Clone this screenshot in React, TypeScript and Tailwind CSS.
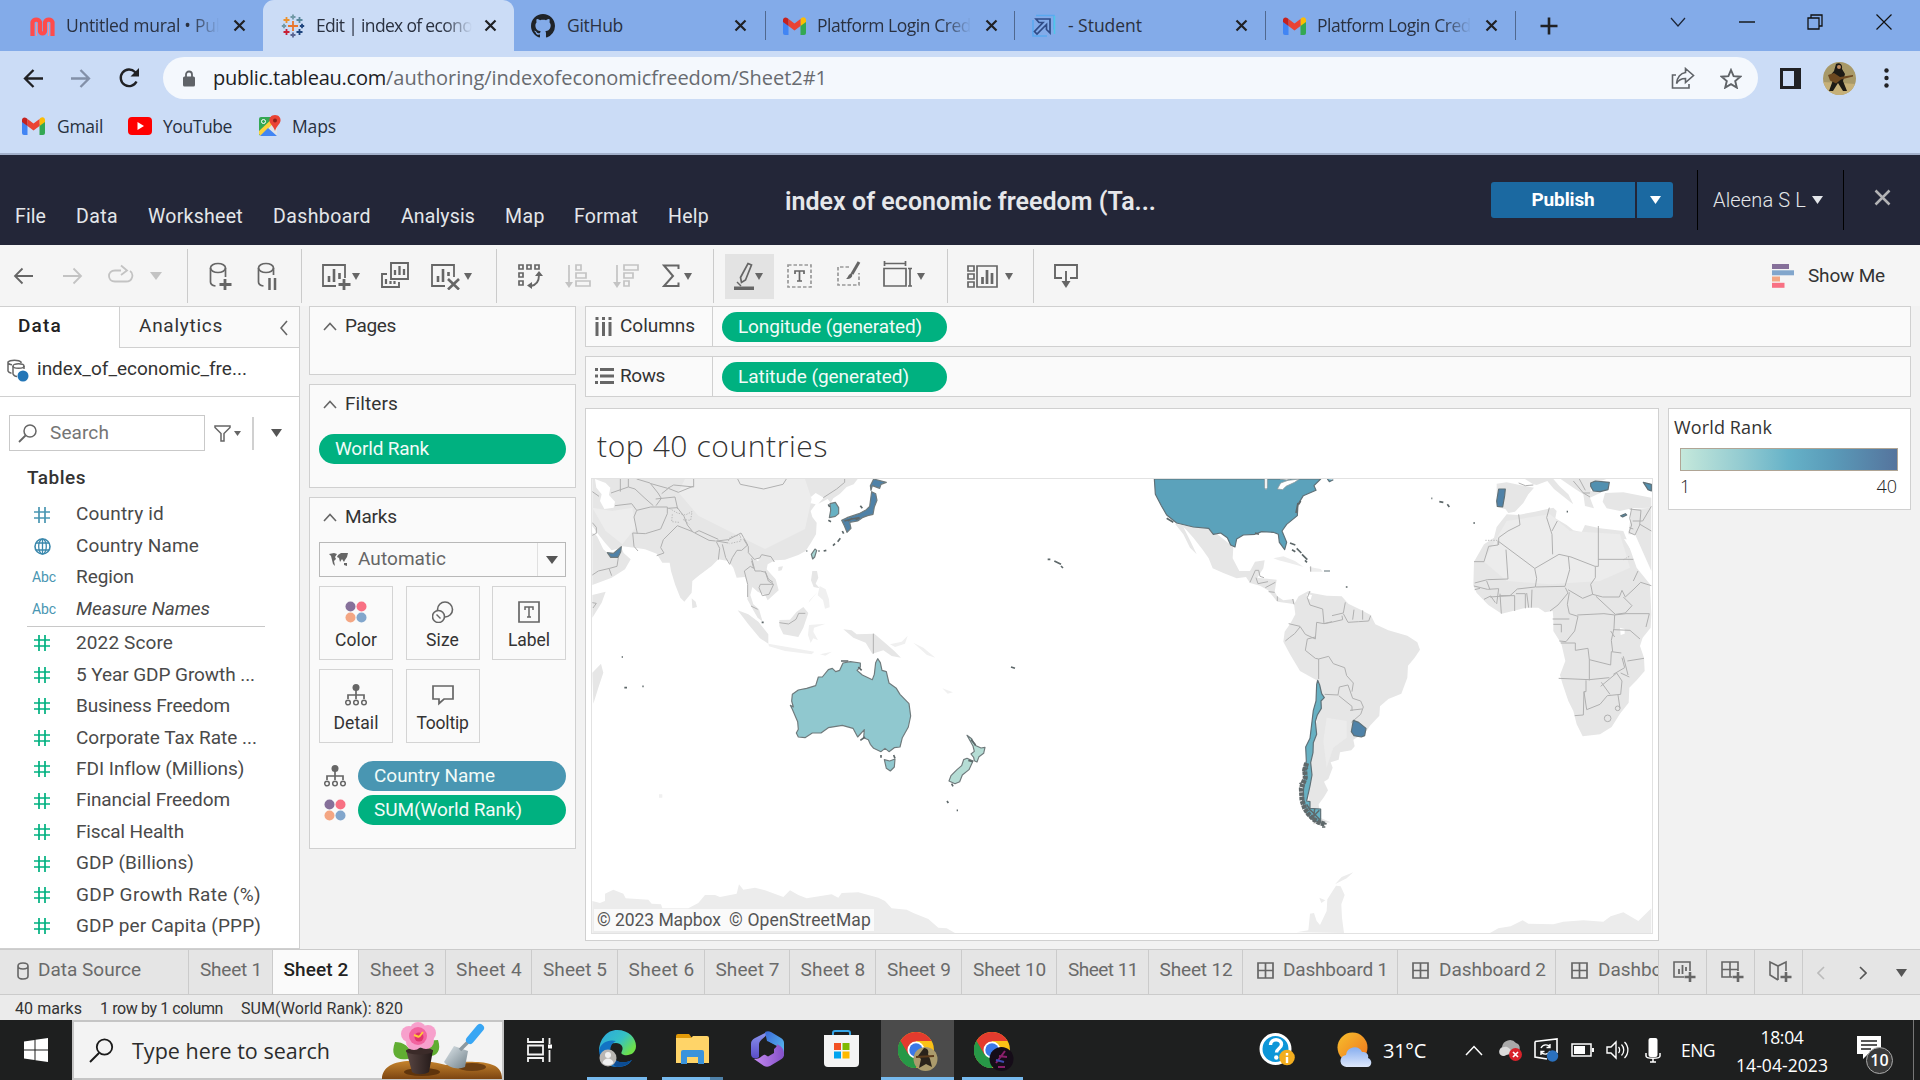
import React, { useLayoutEffect, useRef } from "react";
import type { ReactNode } from "react";

/* One line of text spaced out to an exact measure. */
function Fit({ w, className = "", children }: { w: number; className?: string; children: string }) {
  const ref = useRef<HTMLSpanElement>(null);
  useLayoutEffect(() => {
    const el = ref.current;
    if (!el) return;
    el.style.letterSpacing = "0px";
    const natural = el.getBoundingClientRect().width;
    el.style.letterSpacing = `${(w - natural) / children.length}px`;
  }, [w, children]);
  return (
    <span ref={ref} className={`inline-block shrink-0 whitespace-pre ${className}`}>
      {children}
    </span>
  );
}

function Svg({ w, h, className = "", children }: { w: number; h: number; className?: string; children: ReactNode }) {
  return (
    <svg width={w} height={h} viewBox={`0 0 ${w} ${h}`} fill="none" className={`block shrink-0 ${className}`}>
      {children}
    </svg>
  );
}

const Tri = ({ w = 8, h = 7, className = "" }: { w?: number; h?: number; className?: string }) => (
  <Svg w={w} h={h} className={className}>
    <path d={`M0 0H${w}L${w / 2} ${h}Z`} fill="currentColor" />
  </Svg>
);

const Gmail = ({ className = "" }: { className?: string }) => (
  <Svg w={23} h={18} className={className}>
    <path d="M0 3v13a2 2 0 0 0 2 2h3.5V7z" fill="#4285f4" />
    <path d="M23 3v13a2 2 0 0 1-2 2h-3.5V7z" fill="#34a853" />
    <path d="M17.5 2v7L23 5V3c0-2.600-2.600-3.800-4.600-2z" fill="#fbbc04" />
    <path d="M5.500 9V2l6 4.500 6-4.500v7l-6 4.600z" fill="#ea4335" />
    <path d="M0 3v2l5.500 4V2L4.600 1.200C2.600-.5 0 .6 0 3z" fill="#c5221f" />
  </Svg>
);

const Close = ({ className = "" }: { className?: string }) => (
  <Svg w={13} h={13} className={className}>
    <path d="M1.500 1.500l10 10M11.500 1.500l-10 10" stroke="#202124" strokeWidth="2.200" />
  </Svg>
);

const Mural = () => (
  <Svg w={25} h={20}>
    <path d="M2.500 20V6.300a4 4 0 0 1 7.500 0V15a2.500 2.500 0 0 0 5 0V6.300a4 4 0 0 1 7.500 0V20" stroke="#ff4b4b" strokeWidth="4.200" />
    <path d="M6.500 7v13M18.500 7v13" stroke="#ff8f8f" strokeWidth="1" />
  </Svg>
);

const Plus = ({ x, y, r, c }: { x: number; y: number; r: number; c: string }) => (
  <path d={`M${x - r} ${y}h${2 * r}M${x} ${y - r}v${2 * r}`} stroke={c} strokeWidth="1.800" />
);

const TableauLogo = () => (
  <Svg w={24} h={24}>
    <Plus x={12} y={12} r={5} c="#e8762d" />
    <Plus x={12} y={3} r={2.5} c="#7199a6" />
    <Plus x={12} y={21} r={2.5} c="#5b6591" />
    <Plus x={3} y={12} r={2.2} c="#7199a6" />
    <Plus x={21} y={12} r={2.2} c="#1f457e" />
    <Plus x={5.500} y={6} r={3} c="#eb912c" />
    <Plus x={18.500} y={6} r={3} c="#59879b" />
    <Plus x={5.500} y={18} r={3} c="#c72035" />
    <Plus x={18.500} y={18} r={3} c="#1f457e" />
  </Svg>
);

const GitHub = () => (
  <svg width="24" height="24" viewBox="0 0 16 16" fill="#1f2328" className="block shrink-0">
    <path d="M8 0C3.580 0 0 3.580 0 8c0 3.540 2.290 6.530 5.470 7.590.4.070.55-.17.55-.38 0-.19-.01-.82-.01-1.490-2.010.37-2.530-.49-2.690-.94-.09-.23-.48-.94-.82-1.130-.28-.15-.68-.52-.01-.53.63-.01 1.080.58 1.230.82.72 1.210 1.870.87 2.330.66.07-.52.28-.87.51-1.070-1.780-.2-3.640-.89-3.640-3.950 0-.87.31-1.590.82-2.150-.08-.2-.36-1.020.08-2.120 0 0 .67-.21 2.200.82.64-.18 1.320-.27 2-.27s1.360.09 2 .27c1.530-1.040 2.200-.82 2.200-.82.44 1.100.16 1.920.08 2.120.51.56.82 1.270.82 2.150 0 3.070-1.870 3.750-3.650 3.950.29.25.54.73.54 1.480 0 1.070-.01 1.930-.01 2.200 0 .21.15.46.55.38A8.010 8.010 0 0 0 16 8c0-4.420-3.580-8-8-8z" />
  </svg>
);

const ArrowSquare = () => (
  <Svg w={25} h={24}>
    <path d="M5 1.500h18v14M2 6v16h14" stroke="#5aa9f0" strokeWidth="1.600" />
    <path d="M5 5h14v14l-3.500-3.500v-5L6 20l-2.500-2.500L12 8.500H8z" stroke="#2f4b86" strokeWidth="1.700" />
    <path d="M23.500 2v18" stroke="#4ec8e8" strokeWidth="1.500" />
  </Svg>
);

const tabText = "text-[17.500px] leading-6 font-['Open_Sans',sans-serif] text-[#2a3140]";
const fade = "[mask-image:linear-gradient(to_right,black_82%,transparent)] overflow-hidden";

function Tabs() {
  return (
    <div className="flex h-[51px] items-center bg-[#83abe9]">
      <div className="ml-[30px] w-[24px] flex justify-center"><Mural /></div>
      <div className={`ml-3 w-[153px] ${fade}`}><Fit w={160} className={tabText}>Untitled mural • Pub</Fit></div>
      <Close className="ml-[14px]" />
      <div className="ml-[17px] flex h-[51px] w-[251px] items-center rounded-t-[11px] bg-[#cbdcf6]">
        <div className="ml-[18px]"><TableauLogo /></div>
        <div className={`ml-[11px] w-[156px] ${fade}`}><Fit w={156} className={tabText}>Edit | index of econo</Fit></div>
        <Close className="ml-[12px]" />
      </div>
      <div className="ml-[17px]"><GitHub /></div>
      <div className="ml-3 w-[154px]"><Fit w={56} className={tabText}>GitHub</Fit></div>
      <Close className="ml-[13px]" />
      <div className="ml-[18px] h-[29px] w-px bg-[#50688f]" />
      <Gmail className="ml-[17px]" />
      <div className={`ml-[11px] w-[154px] ${fade}`}><Fit w={154} className={tabText}>Platform Login Cred</Fit></div>
      <Close className="ml-[14px]" />
      <div className="ml-[16px] h-[29px] w-px bg-[#50688f]" />
      <div className="ml-[16px]"><ArrowSquare /></div>
      <div className="ml-[12px] w-[153px]"><Fit w={74} className={tabText}>- Student</Fit></div>
      <Close className="ml-[14px]" />
      <div className="ml-[17px] h-[29px] w-px bg-[#50688f]" />
      <Gmail className="ml-[17px]" />
      <div className={`ml-[11px] w-[154px] ${fade}`}><Fit w={154} className={tabText}>Platform Login Cred</Fit></div>
      <Close className="ml-[14px]" />
      <div className="ml-[17px] h-[29px] w-px bg-[#50688f]" />
      <Svg w={20} h={20} className="ml-[23px]"><path d="M10 1.500v17M1.500 10h17" stroke="#202124" strokeWidth="2.600" /></Svg>
      <Svg w={16} h={10} className="ml-[111px] mb-2"><path d="M1 1l7 8 7-8" stroke="#1c2536" strokeWidth="1.200" /></Svg>
      <Svg w={16} h={2} className="ml-[53px] mb-2"><path d="M0 1h16" stroke="#111" strokeWidth="1.400" /></Svg>
      <Svg w={16} h={16} className="ml-[52px] mb-2"><path d="M1 4h11v11H1zM4 4V1h11v11h-3" stroke="#111" strokeWidth="1.300" /></Svg>
      <Svg w={16} h={16} className="ml-[53px] mb-2"><path d="M.5.5l15 15M15.500.5l-15 15" stroke="#111" strokeWidth="1.200" /></Svg>
    </div>
  );
}

function AddressBar() {
  return (
    <div className="flex h-[54px] items-center">
      <Svg w={20} h={19} className="ml-[23px]"><path d="M20 9.500H2M10.500 1L2 9.500l8.500 8.500" stroke="#202124" strokeWidth="2.300" /></Svg>
      <Svg w={20} h={19} className="ml-[28px]"><path d="M0 9.500h18M9.500 1L18 9.500 9.500 18" stroke="#8390a8" strokeWidth="2.300" /></Svg>
      <Svg w={22} h={22} className="ml-[27px]"><path d="M18.500 14.500A8.300 8.300 0 1 1 17 5l2.500 2.800" stroke="#202124" strokeWidth="2.400" /><path d="M21 1v8.500h-8.500z" fill="#202124" /></Svg>
      <div className="ml-[23px] flex h-[42px] w-[1595px] items-center rounded-full bg-[#f4f8fd]">
        <Svg w={12} h={17} className="ml-[20px]"><path d="M3 8V4.500a3 3 0 0 1 6 0V8" stroke="#5f6368" strokeWidth="1.800" /><rect y="6.500" width="12" height="10" rx="1.500" fill="#5f6368" /></Svg>
        <Fit w={173} className="ml-[18px] font-['Open_Sans',sans-serif] text-[20px] text-[#202124]">public.tableau.com</Fit>
        <Fit w={441} className="font-['Open_Sans',sans-serif] text-[20px] text-[#686b70]">/authoring/indexofeconomicfreedom/Sheet2#1</Fit>
        <Svg w={24} h={22} className="ml-auto"><path d="M5 8H1.500v13H18v-4" stroke="#5f6368" strokeWidth="1.600" /><path d="M14.500 1.500l8 7-8 7v-4c-4.500 0-7 1.500-9 5 .5-6 4-10.500 9-11z" stroke="#5f6368" strokeWidth="1.600" /></Svg>
        <Svg w={22} h={21} className="ml-[25px] mr-[16px]"><path d="M11 2l2.600 6.200 6.700.5-5.100 4.400 1.600 6.500L11 16.100l-5.800 3.500 1.600-6.500L1.700 8.700l6.700-.5z" stroke="#5f6368" strokeWidth="1.900" /></Svg>
      </div>
      <Svg w={21} h={21} className="ml-[22px]"><path d="M1.500 1.500h18v18h-18z" stroke="#202124" strokeWidth="3" /><path d="M14 0h7v21h-7z" fill="#202124" /></Svg>
      <Svg w={33} h={33} className="ml-[22px] rounded-full">
        <path d="M0 0h33v33H0z" fill="#a89968" /><path d="M0 20l33 2v11H0z" fill="#c6b078" />
        <path d="M13 2c3-2 7 0 6 5l3 5-2 7 4 10h-4l-5-8-5 8H6l4-11-4-3 5-6z" fill="#1d1a15" />
        <path d="M5 13l6-2 6 4 13-2v1.500l-12 3-5 4-6-3z" fill="#6d4820" /><circle cx="16" cy="5" r="2" fill="#c08c62" />
      </Svg>
      <Svg w={5} h={20} className="ml-[28px]"><circle cx="2.500" cy="2.500" r="2.200" fill="#202124" /><circle cx="2.500" cy="10" r="2.200" fill="#202124" /><circle cx="2.500" cy="17.500" r="2.200" fill="#202124" /></Svg>
    </div>
  );
}

function Bookmarks() {
  const t = "text-[17.500px] font-['Open_Sans',sans-serif] text-[#27303e]";
  return (
    <div className="flex h-[48px] items-center pb-1.5">
      <Gmail className="ml-[22px]" />
      <Fit w={46} className={`ml-3 ${t}`}>Gmail</Fit>
      <Svg w={24} h={18} className="ml-[25px]"><rect width="24" height="18" rx="4" fill="#f00" /><path d="M9.500 5l6.500 4-6.500 4z" fill="#fff" /></Svg>
      <Fit w={69} className={`ml-[11px] ${t}`}>YouTube</Fit>
      <Svg w={24} h={22} className="ml-[26px]">
        <rect x="1" y="2" width="18" height="19" rx="2" fill="#34a853" /><path d="M1 21L19 4v17z" fill="#dfe3e8" />
        <path d="M1 19v-3L16 2h3v2.500L3 21z" fill="#fbd13c" /><path d="M10 13l9 8H2z" fill="#4285f4" />
        <path d="M17 0c4 0 6 3 5.500 6-.5 3-4 5-5.500 10-1.500-5-5-7-5.500-10C11 3 13 0 17 0z" fill="#ea4335" /><circle cx="17" cy="5.500" r="2" fill="#8e2119" />
        <circle cx="5.500" cy="6.500" r="2" stroke="#fff" />
      </Svg>
      <Fit w={44} className={`ml-[10px] ${t}`}>Maps</Fit>
    </div>
  );
}

function Header() {
  const m = "text-[19.500px] font-['Roboto',sans-serif] text-[#e4e6ea]";
  const items: [string, number, string][] = [
    ["File", 31, "ml-[15px]"], ["Data", 42, "ml-[30px]"], ["Worksheet", 95, "ml-[30px]"], ["Dashboard", 98, "ml-[30px]"],
    ["Analysis", 74, "ml-[30px]"], ["Map", 40, "ml-[30px]"], ["Format", 64, "ml-[29px]"], ["Help", 41, "ml-[30px]"],
  ];
  return (
    <div className="flex h-[90px] bg-[#232638]">
      <div className="flex w-[785px] items-center pt-[34px]">
        {items.map(([s, w, ml]) => <Fit key={s} w={w} className={`${ml} ${m}`}>{s}</Fit>)}
      </div>
      <div className="flex flex-1 items-center">
        <Fit w={371} className="pt-[3px] font-['Roboto',sans-serif] text-[25px] font-semibold text-[#e6e7ea]">index of economic freedom (Ta...</Fit>
        <div className="ml-[335px] flex h-[36px] w-[144px] items-center justify-center rounded-l-[3px] bg-[#1b69a1]">
          <Fit w={63} className="font-['Roboto',sans-serif] text-[19px] font-bold text-white">Publish</Fit>
        </div>
        <div className="ml-[2px] flex h-[36px] w-[36px] items-center justify-center rounded-r-[3px] bg-[#1b69a1] text-white"><Tri w={11} h={8} /></div>
        <div className="ml-[24px] h-[60px] w-px bg-black" />
        <Fit w={93} className="ml-[15px] font-['Roboto',sans-serif] text-[20px] font-light text-[#e4e6ea]">Aleena S L</Fit>
        <Tri w={11} h={8} className="ml-[6px] text-[#e4e6ea]" />
        <div className="ml-[20px] h-[60px] w-px bg-black" />
        <Svg w={17} h={17} className="mb-[5px] ml-[30px]"><path d="M1.500 1.500l14 14M15.500 1.500l-14 14" stroke="#b3b3b5" strokeWidth="2.500" /></Svg>
      </div>
    </div>
  );
}

const G = "#666";
const L = "#c3c3c3";
const Sep = ({ className = "" }: { className?: string }) => <div className={`h-[54px] w-px shrink-0 bg-[#cbcbcb] ${className}`} />;

function Toolbar() {
  return (
    <div className="flex h-[61px] items-center bg-[#f5f5f5] pt-px text-[#666]">
      <Svg w={20} h={18} className="ml-[13px]"><path d="M20 9H2M9.500 1.500L2 9l7.500 7.500" stroke={G} strokeWidth="1.800" /></Svg>
      <Svg w={20} h={18} className="ml-[30px]"><path d="M0 9h18M10.500 1.500L18 9l-7.500 7.500" stroke={L} strokeWidth="1.800" /></Svg>
      <Svg w={27} h={20} className="mb-1 ml-[24px]"><path d="M14 6.500H8c-8 0-8 11 0 11h11c7 0 8-8 4-10.500" stroke={L} strokeWidth="1.800" /><path d="M14 1.500l6 5-6 4.500" stroke={L} strokeWidth="1.800" /></Svg>
      <Tri w={12} h={8} className="ml-[16px] text-[#c3c3c3]" />
      <Sep className="ml-[25px]" />
      <Svg w={24} h={28} className="ml-[21px]"><ellipse cx="9" cy="6" rx="7.500" ry="4.500" stroke={G} strokeWidth="1.700" /><path d="M1.500 6v14c0 2 2 3.500 5 4M16.500 6v9" stroke={G} strokeWidth="1.700" /><path d="M16 17v11M10.500 22.500h12" stroke={G} strokeWidth="2.800" /></Svg>
      <Svg w={21} h={28} className="ml-[24px]"><ellipse cx="9" cy="6" rx="7.500" ry="4.500" stroke={G} strokeWidth="1.700" /><path d="M1.500 6v14c0 2 2 3.500 5 4M16.500 6v7" stroke={G} strokeWidth="1.700" /><path d="M12.500 16v12M18 16v12" stroke={G} strokeWidth="2.500" /></Svg>
      <Sep className="ml-[23px]" />
      <Svg w={29} h={28} className="ml-[20px]"><path d="M14 24H1V3h22v13" stroke={G} strokeWidth="1.800" /><path d="M7 14v6M12 7v13M17.500 11v6" stroke={G} strokeWidth="2.600" /><path d="M22 17v11M16.500 22.500h12" stroke={G} strokeWidth="2.800" /></Svg>
      <Tri className="ml-[1px]" />
      <Svg w={28} h={26} className="mb-0.5 ml-[21px]"><path d="M10 1h17v16H10z" stroke={G} strokeWidth="1.900" /><path d="M14 8v5M18.500 4v9M23 7v6" stroke={G} strokeWidth="2.300" /><path d="M6 12H1v13h17v-5" stroke={G} strokeWidth="1.900" /><path d="M5 17v5M9.500 19v3M13.500 19v3" stroke={G} strokeWidth="2.200" /></Svg>
      <Svg w={30} h={28} className="ml-[22px]"><path d="M14 24H1V3h22v12" stroke={G} strokeWidth="1.800" /><path d="M7 14v6M12 7v13M17.500 10v4" stroke={G} strokeWidth="2.600" /><path d="M17 17l11 10.500M28 17L17 27.500" stroke={G} strokeWidth="2.600" /></Svg>
      <Tri className="ml-[3px]" />
      <Sep className="ml-[24px]" />
      <Svg w={26} h={26} className="ml-[20px]"><path d="M2 2h4v4H2zM10 2h4v4h-4zM18 2h4v4h-4zM2 10h4v4H2zM2 18h4v4H2z" stroke={G} strokeWidth="1.700" /><path d="M22 12c0 6-3 10-8 11" stroke={G} strokeWidth="1.900" /><path d="M18 13l4-5 4 5zM15 19v7l-5-3.500z" fill={G} /></Svg>
      <Svg w={26} h={24} className="ml-[22px]"><path d="M4 1v19M11 1h5v5h-5zM11 9h10v5H11zM11 17h14v5H11z" stroke={L} strokeWidth="1.700" /><path d="M0 18h8l-4 6z" fill={L} /></Svg>
      <Svg w={26} h={24} className="ml-[22px]"><path d="M4 1v19M11 1h14v5H11zM11 9h9v5h-9zM11 17h5v5h-5z" stroke={L} strokeWidth="1.700" /><path d="M0 18h8l-4 6z" fill={L} /></Svg>
      <Svg w={18} h={24} className="ml-[23px]"><path d="M16.500 5V1.500H2L11 12 2 22h14.500v-3.500" stroke={G} strokeWidth="2" /></Svg>
      <Tri className="ml-[4px]" />
      <Sep className="ml-[21px]" />
      <div className="ml-[11px] flex h-[45px] w-[49px] items-center bg-[#e3e3e3]">
        <Svg w={20} h={28} className="ml-[9px]"><path d="M14 1.500l3.500 1.500-6 15-4 2.500-1-5z" stroke={G} strokeWidth="1.700" /><path d="M3 20l4 4" stroke={G} strokeWidth="1.500" /><path d="M0 24.500h20V28H0z" fill={G} /></Svg>
        <Tri className="ml-[1px]" />
      </div>
      <Svg w={25} h={24} className="ml-[13px]"><path d="M1 1h23v22H1z" stroke="#999" strokeWidth="1.700" strokeDasharray="3.500 2" /><path d="M8 10V7h9v3M12.500 7v10M10 17h5" stroke={G} strokeWidth="1.700" /></Svg>
      <Svg w={24} h={26} className="mb-1 ml-[25px]"><path d="M12 6H1v18h21V12" stroke="#999" strokeWidth="1.700" strokeDasharray="3.500 2" /><path d="M22 1l-7 12" stroke={G} strokeWidth="3" /><path d="M15 12c1 4-1 6-6 6 2-1 2-5 6-6z" fill={G} /></Svg>
      <Svg w={29} h={26} className="mb-1 ml-[22px]"><path d="M1 7.500h22V25H1zM1 2.500h22M1.500 0v5M22.500 0v5M27 7v18M25 7.500h4M25 25h4" stroke={G} strokeWidth="1.700" /></Svg>
      <Tri className="ml-[5px]" />
      <Sep className="ml-[22px]" />
      <Svg w={31} h={23} className="ml-[19px]"><path d="M1 1h6v5H1zM1 9h6v5H1zM1 17h6v5H1zM10 1h20v21H10z" stroke={G} strokeWidth="1.700" /><path d="M15.500 12v7M20 5v14M25 8v11" stroke={G} strokeWidth="2.700" /></Svg>
      <Tri className="ml-[7px]" />
      <Sep className="ml-[20px]" />
      <Svg w={24} h={24} className="ml-[20px]"><path d="M8 14H1V1h22v13h-7M12 7v12" stroke={G} strokeWidth="1.900" /><path d="M7.500 17h9L12 24z" fill={G} /></Svg>
      <Svg w={22} h={24} className="ml-[694px]"><path d="M0 0h17v5H0z" fill="#86709a" /><path d="M0 6.300h22v5H0z" fill="#82a6cc" /><path d="M0 12.500h8v5H0z" fill="#f4a683" /><path d="M0 18.800h12.500v5H0z" fill="#f87083" /></Svg>
      <Fit w={77} className="ml-[14px] font-['Roboto',sans-serif] text-[19px] text-[#333]">Show Me</Fit>
    </div>
  );
}

const Hash = ({ c }: { c: string }) => (
  <Svg w={16} h={16}><path d="M5 0v16M11 0v16M0 5h16M0 11h16" stroke={c} strokeWidth="1.700" /></Svg>
);
const Globe = () => (
  <Svg w={17} h={17}><circle cx="8.500" cy="8.500" r="7.500" stroke="#3c89ad" strokeWidth="1.600" /><ellipse cx="8.500" cy="8.500" rx="3.800" ry="7.500" stroke="#3c89ad" strokeWidth="1.300" /><path d="M2 5h13M2 12h13M8.500 1v15" stroke="#3c89ad" strokeWidth="1.300" /></Svg>
);

function FieldRow({ kind, text, w, italic }: { kind: "dim" | "geo" | "abc" | "num"; text: string; w: number; italic?: boolean }) {
  return (
    <div className="flex h-[31.450px] items-center">
      <div className="ml-[28px] flex w-[28px] justify-center">
        {kind === "dim" && <Hash c="#4996b2" />}
        {kind === "num" && <Hash c="#00b180" />}
        {kind === "geo" && <Globe />}
        {kind === "abc" && <Fit w={24} className="ml-1 font-['Roboto',sans-serif] text-[14px] text-[#4996b2]">Abc</Fit>}
      </div>
      <Fit w={w} className={`ml-[20px] font-['Roboto',sans-serif] text-[19px] text-[#4a4a4a] ${italic ? "italic" : ""}`}>{text}</Fit>
    </div>
  );
}

function DataPane() {
  return (
    <div className="flex h-[643px] w-[300px] shrink-0 flex-col overflow-hidden border-b border-r border-t border-[#d0d0d0] bg-white">
      <div className="flex h-[41px] shrink-0">
        <div className="w-[119px] pl-[18px] pt-[5px]"><Fit w={44} className="font-['Roboto',sans-serif] text-[19px] font-medium text-[#222]">Data</Fit></div>
        <div className="flex w-[180px] border-b border-l border-[#d0d0d0] bg-[#fafafa] pt-[5px]">
          <Fit w={84} className="ml-[19px] font-['Roboto',sans-serif] text-[19px] text-[#333]">Analytics</Fit>
          <Svg w={8} h={16} className="ml-[57px] mt-[8px]"><path d="M7 1L1 8l6 7" stroke={G} strokeWidth="1.600" /></Svg>
        </div>
      </div>
      <div className="flex h-[49px] shrink-0 border-b border-[#d0d0d0]">
        <Svg w={22} h={23} className="ml-[7px] mt-[11px]"><path d="M14 4V3c-2-2.500-11-2.500-13 0v9c.5 1.500 2 2 3.500 2.200M1 4c1 1.500 3 1.800 4 1.800" stroke={G} strokeWidth="1.500" /><ellipse cx="11.500" cy="7" rx="5.500" ry="2.300" stroke={G} strokeWidth="1.500" /><path d="M6 7v8c1 2 3 2.500 4 2.500M17 7v3" stroke={G} strokeWidth="1.500" /><circle cx="16" cy="17" r="5.500" fill="#2376b7" /></Svg>
        <Fit w={210} className="ml-[8px] mt-[7px] font-['Roboto',sans-serif] text-[19px] text-[#333]">index_of_economic_fre...</Fit>
      </div>
      <div className="mt-[18px] flex h-[36px] shrink-0 items-center">
        <div className="ml-[9px] flex h-[36px] w-[196px] items-center border border-[#c9c9c9]">
          <Svg w={19} h={19} className="ml-[8px]"><circle cx="12" cy="7" r="6" stroke={G} strokeWidth="1.500" /><path d="M7.500 11.500L1 18" stroke={G} strokeWidth="1.800" /></Svg>
          <Fit w={59} className="ml-[13px] font-['Roboto',sans-serif] text-[19px] text-[#757575]">Search</Fit>
        </div>
        <Svg w={17} h={17} className="ml-[9px]"><path d="M1 1h15v1.500l-6 6V16H7V8.500l-6-6z" stroke={G} strokeWidth="1.500" /></Svg>
        <Tri w={7} h={5} className="ml-[3px] text-[#666]" />
        <div className="ml-[11px] h-[33px] w-[2px] bg-[#d0d0d0]" />
        <Tri w={11} h={8} className="ml-[17px] text-[#555]" />
      </div>
      <div className="ml-[27px] mt-[13px] h-[35px] shrink-0"><Fit w={59} className="font-['Roboto',sans-serif] text-[19px] font-medium text-[#333]">Tables</Fit></div>
      <FieldRow kind="dim" text="Country id" w={88} />
      <FieldRow kind="geo" text="Country Name" w={123} />
      <FieldRow kind="abc" text="Region" w={58} />
      <FieldRow kind="abc" text="Measure Names" w={134} italic />
      <div className="mb-px ml-[27px] mt-[1px] h-px w-[238px] shrink-0 bg-[#c8c8c8]" />
      <FieldRow kind="num" text="2022 Score" w={97} />
      <FieldRow kind="num" text="5 Year GDP Growth ..." w={179} />
      <FieldRow kind="num" text="Business Freedom" w={154} />
      <FieldRow kind="num" text="Corporate Tax Rate ..." w={181} />
      <FieldRow kind="num" text="FDI Inflow (Millions)" w={168} />
      <FieldRow kind="num" text="Financial Freedom" w={154} />
      <FieldRow kind="num" text="Fiscal Health" w={108} />
      <FieldRow kind="num" text="GDP (Billions)" w={118} />
      <FieldRow kind="num" text="GDP Growth Rate (%)" w={185} />
      <FieldRow kind="num" text="GDP per Capita (PPP)" w={185} />
    </div>
  );
}

const CardTitle = ({ text, w }: { text: string; w: number }) => (
  <div className="flex h-[39px] items-center">
    <Svg w={14} h={9} className="ml-[13px]"><path d="M1 8l6-6.500L13 8" stroke={G} strokeWidth="1.600" /></Svg>
    <Fit w={w} className="ml-[8px] font-['Roboto',sans-serif] text-[19px] text-[#333]">{text}</Fit>
  </div>
);
const Pill = ({ text, w, className }: { text: string; w: number; className: string }) => (
  <div className={`flex h-[30px] items-center rounded-full pl-4 ${className}`}>
    <Fit w={w} className="font-['Roboto',sans-serif] text-[19px] text-[#f2fbf8]">{text}</Fit>
  </div>
);
const ColorDots = ({ className = "" }: { className?: string }) => (
  <Svg w={22} h={22} className={className}><circle cx="5.500" cy="5.500" r="5" fill="#86709a" /><circle cx="16.500" cy="5.500" r="5" fill="#f87083" /><circle cx="5.500" cy="16.500" r="5" fill="#f4a683" /><circle cx="16.500" cy="16.500" r="5" fill="#82a6cc" /></Svg>
);
const DetailIcon = () => (
  <Svg w={22} h={22}><circle cx="11" cy="3.500" r="3.500" fill={G} /><path d="M11 6v9M3 15v-4h16v4" stroke={G} strokeWidth="1.700" /><circle cx="3" cy="18.500" r="2.300" stroke={G} strokeWidth="1.500" /><circle cx="11" cy="18.500" r="2.300" stroke={G} strokeWidth="1.500" /><circle cx="19" cy="18.500" r="2.300" stroke={G} strokeWidth="1.500" /></Svg>
);
const MarkButton = ({ text, w, children }: { text: string; w: number; children: ReactNode }) => (
  <div className="flex h-[74px] flex-col items-center border border-[#d4d4d4] bg-[#fafafa] pt-[13px]">
    <div className="flex h-[23px] items-center">{children}</div>
    <Fit w={w} className="mt-[5px] font-['Roboto',sans-serif] text-[17.500px] leading-[24px] text-[#333]">{text}</Fit>
  </div>
);

function CardsColumn() {
  const card = "border border-[#d0d0d0] bg-[#fafafa]";
  return (
    <div className="ml-[9px] w-[267px] shrink-0">
      <div className={`h-[69px] ${card}`}><CardTitle text="Pages" w={51} /></div>
      <div className={`mt-[9px] h-[104px] ${card}`}>
        <CardTitle text="Filters" w={53} />
        <Pill text="World Rank" w={94} className="ml-[9px] mt-[10px] w-[247px] bg-[#00b180]" />
      </div>
      <div className={`mt-[9px] h-[352px] ${card}`}>
        <CardTitle text="Marks" w={52} />
        <div className="ml-[9px] mt-[5px] flex h-[35px] w-[247px] items-center border border-[#b8b8b8] bg-[#fafafa]">
          <Svg w={20} h={15} className="ml-[9px]"><path d="M0 2l5-1 3 1-2 3 1 2-2 2 1 5-2-2-1-4-1-4zM9 3l3-2 7 0-1 4-2 3-1 2-2-3-2 3-1-4-2-1zM15 11l3 0 0 3-3-1z" fill={G} /></Svg>
          <Fit w={88} className="ml-[9px] font-['Roboto',sans-serif] text-[19px] text-[#666]">Automatic</Fit>
          <div className="ml-auto flex h-full w-[28px] items-center justify-center border-l border-[#e0e0e0] pl-px text-[#555]"><Tri w={12} h={8} /></div>
        </div>
        <div className="ml-[9px] mt-[9px] grid w-[247px] grid-cols-[74px_74px_74px] justify-between gap-y-[9px]">
          <MarkButton text="Color" w={42}><ColorDots /></MarkButton>
          <MarkButton text="Size" w={33}><Svg w={22} h={22}><circle cx="13" cy="8.500" r="7.500" stroke={G} strokeWidth="1.600" /><circle cx="6.500" cy="15.500" r="6" fill="#fafafa" stroke={G} strokeWidth="1.600" /><path d="M4.500 13.500l4 4" stroke={G} strokeWidth="1.400" /></Svg></MarkButton>
          <MarkButton text="Label" w={42}><Svg w={22} h={22}><path d="M1 1h20v20H1z" stroke={G} strokeWidth="1.700" /><path d="M7 9V6h8v3M11 6v10M9 16h4" stroke={G} strokeWidth="1.500" /></Svg></MarkButton>
          <MarkButton text="Detail" w={45}><DetailIcon /></MarkButton>
          <MarkButton text="Tooltip" w={52}><Svg w={22} h={22}><path d="M1 2h20v13h-9l-5 4.500V15H1z" stroke={G} strokeWidth="1.700" /></Svg></MarkButton>
        </div>
        <div className="mt-[18px] flex items-center"><div className="ml-[14px]"><DetailIcon /></div><Pill text="Country Name" w={121} className="ml-[12px] w-[208px] bg-[#4996b2]" /></div>
        <div className="mt-[4px] flex items-center"><ColorDots className="ml-[14px]" /><Pill text="SUM(World Rank)" w={148} className="ml-[12px] w-[208px] bg-[#00b180]" /></div>
      </div>
    </div>
  );
}

const land = "#e6e6e6";
const edge = "#b0b0b0";

/* The map is drawn at triple scale in two groups, one for each side of the Pacific. */
function MapView() {
  return (
    <svg width="1060" height="454" viewBox="0 0 1060 454" className="block">
      <g transform="translate(-7 -8) scale(.33333)" strokeLinejoin="round">
        <g fill={land}>
          <path d="M22 24H818L806 40 785 48 765 68 745 82 737 95 728 84 700 98 716 80 692 66 675 80 664 94 692 100 677 120 682 138 695 155 693 190 678 215 662 240 640 252 600 266 570 268 548 280 545 295 572 325 581 358 548 388 540 372 518 362 502 348 496 372 505 400 522 415 533 452 518 440 505 418 487 385 489 340 480 318 455 320 445 290 430 270 400 265 380 285 340 315 322 330 320 365 298 392 286 380 270 340 258 300 254 275 232 275 215 248 180 235 160 232 112 226 104 232 80 238 60 215 40 190 22 165Z" />
          <path d="M22 185L36 195 55 235 70 248 95 258 108 228 116 246 137 265 120 295 80 320 22 342ZM22 372L62 362 50 395 22 440ZM22 605L48 578 55 605 40 650 25 698ZM320 382L332 392 336 408 322 412ZM580 288l14-2-4 12-10 2zM682 300l14 0 4 20-8 18 12 14-18-4-8-20z" />
          <path d="M458 418L490 430 520 452 550 490 550 518 525 502 490 460ZM583 447L615 446 635 422 655 408 670 426 655 470 640 498 595 490 583 465ZM775 475L800 478 815 490 868 488 905 520 928 540 948 560 920 555 895 538 862 548 842 515 805 500Z" />
          <path d="M22 1290L45 1296 60 1290V1268L85 1256 115 1268 122 1282 190 1286 200 1298 228 1300 232 1312 310 1312 340 1296 360 1272 390 1272 405 1278 455 1268 462 1240 475 1256 510 1250 540 1258 595 1278 615 1258 640 1272 665 1282 740 1270 760 1280 770 1266 820 1264 880 1280 900 1290 920 1312 965 1316 985 1326 1030 1344 1060 1370 1085 1372 1110 1386H22Z" fill="#ececec" />
        </g>
        <g fill="#ededed"><path d="M300 24h360l20 60-20 90-120 60-80-40-120-60-60-70z" /><path d="M22 110l60 10 60-10 10 60-40 50-50-40z" /></g>
        <g fill="#f0f0f0"><path d="M550 518L620 530 688 542 680 550 600 540 552 526ZM705 550l36-8-20 12zM915 520l35-8 18-18-8 24-30 10zM985 515l30 15 36 30-25-8zM1072 652l32 12-16 4zM222 970h10v10h-10zM704 345l18 10 10 30 2 24-14 4-6-26-16-14zM700 360l-30 36 4-8zM672 462l50-4-35 12-2 12 14 26-14-6-8 14-8-24z" /></g>
        <path d="M30 24L62 36 76 50 72 72 90 92 86 110 58 114 45 90 50 70 34 50ZM508 262l16 4-6 4z" fill="#fff" />
        <path d="M106 24V62M130 24V48L78 66M130 48l20 6 30 28 25 22M155 24l40 12 24 30 10 16-16 22M198 38l50 14 18-10 60 6V24M230 68l20-16 30 12 44-18M212 84l58-6 8 36M90 104l50-6 15 20 42-10 50 0 0 20-20 46-46 14-38-2 4 40 12 14M155 118l-8 20 10 50M247 112l30-2 20 26 10 26 16 20-46-18-42 42-8 24 10 16-22 8M322 182l50 26 20 2M330 185l12-6 58 26M395 210l35-4 38-20 8 14 12 22-18 16-14 0-14 22-8 20-12-20-10-40M394 212l10 20-4 34M430 216l-36-6M476 205l14 22 0 18 18 20 16-4 6-10 28 6 10 16M500 262l10 38 16 0 16 4 8 20 14 10M478 300l18-14 10 6-6-22M478 300l10 40 0 38M522 350l4-10 38 0M522 350l10 24 20-4 14-30-16-10-10-30M498 405l20 10M583 455l28 4 22-14 8-18 20 0M865 488V548M458 24l8 16 70 14 58-14 10-16M715 80l40-26 24-20V24M22 62l20 14M22 155l12 14 0 18-12 6M22 312l18-12 34-8 22-6 4-26M72 292l8 22M22 395l12 2-10 14" fill="none" stroke={edge} strokeWidth="3" />
        <path d="M253 112l24 14 24 6 20-10-4 26-22-2 18 14M262 130l-2 22 22 2M430 210l6-12 30-6 2 18-34 8" fill="none" stroke={edge} strokeWidth="2.500" strokeDasharray="4 4" />
        <g stroke="#6f7a7c" strokeWidth="3.500">
          <path d="M616 703L625 708 620 690 622 670 640 657 665 652 692 644 700 618 712 618 730 596 742 592 752 602 764 598 774 576 796 572 826 576 826 588 816 598 832 612 862 626 868 610 872 575 878 563 886 575 891 598 904 602 912 636 934 652 945 670 972 698 977 735 970 768 952 800 945 828 928 830 912 842 900 832 888 842 866 832 856 820 850 806 836 800 838 776 818 798 804 772 772 763 730 770 708 786 682 786 660 800 640 798 634 786 640 775 638 752 622 715Z" fill="#90c8cf" />
          <path d="M898 866l16 4 16-6-2 24-12 12-12-8z" fill="#90c8cf" />
          <path d="M1146 793l14 10 10 20 18 8 12-2-4 18-14 10-6 16-8-4-2-10-8-10 10-8-4-16zM1146 862l18 8-12 26-20 16-8 20-14 6-18-8 6-16 18-18 14-12 6-18z" fill="#b5ddd5" />
          <path d="M866 24l38 10-16 6-4 12-22-8-4 14-2-14zM860 62l12 6 4 20-8 20-4 22-16 4-16 6-14 10-24 4 4 18-12 12-8-20-8-16 16-8 36-12 22-12 10-10zM67 245l18 2 24-20-2 16-8 16-22 0z" fill="#4f82a8" />
          <path d="M735 98l16-4 10 16 0 18-10 8-18 4 4-22z" fill="#67b1c3" />
          <path d="M690 234l5 4-6 20-6 6-4-14z" fill="#a4d4d2" />
        </g>
        <path d="M778 150l22-6 24-4M772 180l4 8M766 202l-8 10M750 218l-6 6M724 238l-8 2M700 240h4M664 240h3M530 454h6M118 650h8M172 646h4M110 558h4M768 570h22M820 588l10 10M826 808l14-10M888 852v8M926 852l4 10M1086 990l4 6M1115 1018h4M1278 588l12 4M1100 938l4 8M1388 265h8M1408 270l20 10M1428 285l6 6M788 150l14-8M812 146l12-6M826 104l6 8M730 148l8 4M730 100l4 8M1158 806l14 16M1150 868l14 4" stroke="#5d6769" strokeWidth="5" fill="none" />
      </g>
      <g transform="translate(548 -8) scale(.33333)" strokeLinejoin="round">
        <g fill={land}>
          <path d="M105 158L160 168 210 172 245 200 280 228 278 262 298 300 330 300 345 272 374 268 370 292 352 320 410 326 404 362 412 376 430 388 462 384 464 400 440 396 412 392 384 358 360 344 330 336 318 318 290 322 250 306 218 292 206 262 188 236 160 200 140 178 130 168 150 208 170 250 150 230 130 190Z" />
          <path d="M462 400L476 376 505 360 515 366 560 374 605 376 625 398 665 418 692 432 706 460 745 478 802 494 832 514 840 536 824 560 804 584 802 620 784 668 745 684 720 706 718 734 690 764 678 782 640 806 644 826 634 838 600 844 596 866 572 874 578 890 565 924 552 932 564 958 552 978 536 1000 540 1040 572 1054 520 1060 505 1000 510 880 524 780 540 700 530 628 480 600 450 550 430 512 434 482 452 456 466 430Z" />
          <path d="M1070 38L1100 34 1150 44 1182 50 1165 70 1150 96 1125 122 1105 126 1096 114 1070 108ZM1100 130L1135 132 1185 122 1240 110 1250 120 1246 142 1280 162 1300 178 1325 184 1335 162 1380 172 1450 180 1460 205 1490 290 1530 340 1534 430 1532 470 1508 500 1500 525 1512 560 1514 600 1490 628 1468 650 1466 695 1440 728 1415 768 1380 790 1328 796 1310 760 1300 720 1285 690 1268 640 1260 612 1276 570 1264 518 1240 480 1240 440 1238 420 1215 424 1195 410 1160 410 1085 428 1045 402 1010 366 1000 344 1002 272 1032 220 1062 200 1070 168Z" />
          <path d="M1534 110L1475 112 1440 120 1400 112 1388 92 1395 66 1450 64 1534 80ZM1155 24L1180 40 1190 42 1222 30 1242 54 1290 92 1300 100 1285 70 1258 45 1240 24ZM1262 24L1300 50 1330 70 1335 105 1362 112 1350 80 1385 64 1352 60V40L1400 24ZM1534 110L1475 115 1465 190 1485 190 1534 300Z" />
          <path d="M400 262l30-6 35 14 26 18-35-10-40-10zM508 288l34 6 6 8-36 0z" fill="#ededed" />
          <path d="M470 1384L505 1378 510 1328 522 1326 530 1350 540 1362 560 1320 562 1285 588 1244 602 1246 614 1272 604 1300 606 1340 612 1386ZM1050 1386L1075 1372 1112 1366 1148 1348 1165 1358 1240 1360 1270 1352 1330 1348 1390 1352 1412 1336 1450 1324 1495 1350 1534 1312V1386ZM585 1240l20-22 35-14-20 18zM538 1280l18 8-12 8z" fill="#ececec" />
        </g>
        <g fill="#ececec"><path d="M1100 150l130-20 60 50 150 10 30 100-90 40-150 10-130-10-70-60z" /><path d="M560 740l60 10 0 50-40 30-20 60-10-80z" /></g>
        <path d="M1452 204l18 2 62 100 2 14-16-12zM1440 470l14 4 0 14-12 4zM500 370l16 2-4 14-10-4z" fill="#fff" />
        <path d="M1136 130l4 32-36 18-28 20 0 22M1002 272l30 0 14-46 28-4 0-12 110 82 6 30-4 26-54 6-22 20-60 4M1185 292l72-42 36 8 72 28 10 0V165M1374 265h106M1238 250l-2-60-16-50 8-30M1236 180l16-30M1285 256l4 40-14 50-88 2M1366 288v32l-14 20 6 30-30 12-44-26M1358 370l30 8 50 0 8-20 10 20 26-24 20-20 32 10M1098 236l6 88-62 2-38 10M1002 345l40 10 34-2-6 46M1040 330l10 26M1080 368l4 60M1078 374l46 0 0 46M1128 368l28 0 0 44M1160 366l6 44M1174 410l2-54M1020 352l-16 4M1032 385l20-10 14 20M1230 420l24-18 30-36-8-16M1288 364l-6 36 6 28 26 8-10 44-26 32-20-2M1238 444h50M1240 460h24v24M1312 432l80-4 32 4-2 40-8 36M1368 376l58 54 30-4 20-22-26-26M1424 432l34-4 70 0-10 40M1262 516h44l0 22 38-6 4 34M1348 566l64 16 2-40 30 4M1414 508l4 34M1348 566V628M1256 622l92 4 60-6M1338 628v34h-6l-2 70-26 2M1332 662l8 54 40-16 22-26 40-4 4-40-16-24-48 40M1446 560l8 30-34 20M1450 556l14 56M1462 570l50-8M1420 476l50 2 30 26M1412 480l12 18M1442 606l26 12M1384 634l26 36M1434 672l6 40M1480 330l14-30" fill="none" stroke={edge} strokeWidth="3" />
        <path d="M1036 208h38M1450 266l18-10" stroke={edge} strokeWidth="2.500" strokeDasharray="4 4" />
        <circle cx="1403" cy="742" r="10" fill="none" stroke={edge} strokeWidth="3" /><circle cx="1433" cy="712" r="7" fill="none" stroke={edge} strokeWidth="3" />
        <path d="M510 360l-8 20 8 22 38 12 4 44 22-4 34-8-2-12M576 452l-24 6-22-4M530 454l-4 50-30-14-16-24-34-8M576 434l34-8 6-32M610 428l14 26 32-2 30-2 6-16M642 416l-4 30M668 418v28M480 468l-16 20-16 12-12 10M526 498l-24 6-6 34 30 24 10 2 0 60M536 564l30-8 14 22 34 12 6 24 20 22-4 26M554 670l40 2 4-24 26-6 14 40 24 8 8 18-8 22-28 24M636 720l0-14-40-32M630 718l36-4M330 334l16-36h10l4 18 12 4M348 320l6 18 30-6M376 350l30-16M386 362l18 2M412 376l0 14M512 286v16M458 384l4 16M1136 36l20 8 24-2M1300 30l30 36 20 12M1318 24l18 34M1330 66l20 0M1475 112l-6 30 6 20-8 22 18 8 14-30 4-44-34-4M1478 150l30 0 26-44M1500 160l34 20M1468 170l12 4" fill="none" stroke={edge} strokeWidth="3" />
        <g stroke="#5f7077" strokeWidth="3.500">
          <path d="M43 24L46 70 64 104 80 132 110 156 160 168 206 172 220 190 242 186 262 200 272 222 285 228 290 204 310 192 345 190 365 182 400 184 415 190 418 214 434 236 440 214 426 180 440 160 472 134 474 100 490 74 528 58 522 44 542 24Z" fill="#5ba2bb" />
          <path d="M533 628L539 642 545 668 553 680 543 690 544 712 532 732 526 752 530 790 520 815 519 845 512 875 516 912 510 945 500 990 510 992 510 1012 542 1014 542 1056 520 1048 498 1024 488 990 492 940 494 890 499 870 497 828 510 802 515 760 520 718 528 690 530 640Z" fill="#67b1c3" />
          <path d="M640 748l16 6 22 18-4 22-10 4-22-4-8-12zM1076 54l20 0-2 20-6 34-16-2-2-16z" fill="#4f82a8" />
          <path d="M1352 36l14-6 42 4-4 22-24 6-20-2-8-14zM1510 34l24 6v20l-10-4zM1442 134l14-6 4 4-12 6zM552 300h18" fill="#5190b0" />
          <path d="M562 24l6 8 12-6" fill="#5ba2bb" />
        </g>
        <path d="M374 24v26l4 6 4-6V24M412 54l10-18 22-8 34-4-14 10-26 12-10 10zM420 24l20 4 10-4z" fill="#fff" stroke="#8a9ba0" strokeWidth="2.500" />
        <path d="M500 876l-6 20 2 24-8 20-4 12 2 36 8 24 12 18 14 14 16 10 20 6" stroke="#5f686a" strokeWidth="15" strokeDasharray="11 2" fill="none" />
        <path d="M512 1018l28 28M516 1040l22-22M488 900l16-10M478 938l10-4M500 1000l12 20M524 1014l-4 30M542 1058h18M546 1068h10" stroke="#5f686a" strokeWidth="4.500" />
        <path d="M450 216l16 6M456 236l10 6M470 232l14 14M486 250l16 16M495 268l6 6M620 346v4M874 82h3M898 92l12 2M922 100l6 8M1000 156h5M1280 122h4M474 96l-6 30M482 90l-6 10M80 142l20 12M345 186l12 4" stroke="#5d6769" strokeWidth="5" fill="none" />
      </g>
    </svg>
  );
}

function ShelfIcon({ cols }: { cols?: boolean }) {
  return cols ? (
    <Svg w={17} h={19}><path d="M2 0v3M8.500 0v3M15 0v3M2 5v14M8.500 5v14M15 5v14" stroke={G} strokeWidth="3" /></Svg>
  ) : (
    <Svg w={19} h={16}><path d="M0 1.500h3M0 8h3M0 14.500h3M5 1.500h14M5 8h14M5 14.500h14" stroke={G} strokeWidth="3" /></Svg>
  );
}

function Shelf({ label, lw, pill, pw, cols, className }: { label: string; lw: number; pill: string; pw: number; cols?: boolean; className: string }) {
  return (
    <div className={`flex w-[1326px] border border-[#d0d0d0] bg-[#fafafa] ${className}`}>
      <div className="flex w-[127px] items-center border-r border-[#d0d0d0] pb-px">
        <div className="ml-[9px] w-[19px]"><ShelfIcon cols={cols} /></div>
        <Fit w={lw} className="ml-[6px] font-['Roboto',sans-serif] text-[19px] text-[#333]">{label}</Fit>
      </div>
      <Pill text={pill} w={pw} className="ml-[9px] mt-[5px] w-[225px] bg-[#00b180]" />
    </div>
  );
}

function Workspace() {
  return (
    <div className="ml-[9px] flex flex-1 flex-col">
      <Shelf cols label="Columns" lw={75} pill="Longitude (generated)" pw={184} className="h-[41px]" />
      <Shelf label="Rows" lw={45} pill="Latitude (generated)" pw={171} className="mt-[9px] h-[41px]" />
      <div className="mt-[11px] flex items-start">
        <div className="h-[533px] w-[1074px] border border-[#d0d0d0] bg-white pl-[5px]">
          <div className="flex h-[69px] items-center pt-1"><Fit w={231} className="ml-[6px] font-['Open_Sans',sans-serif] text-[30px] font-light text-[#333]">top 40 countries</Fit></div>
          <div className="relative h-[456px] w-[1062px] border border-[#e2e2e2]">
            <MapView />
            <div className="absolute bottom-[2px] left-[2px] flex h-[22px] items-center bg-white/75 px-[3px]">
              <Fit w={124} className="font-['Roboto',sans-serif] text-[17.500px] text-[#555]">© 2023 Mapbox</Fit>
              <Fit w={142} className="ml-[8px] font-['Roboto',sans-serif] text-[17.500px] text-[#555]">© OpenStreetMap</Fit>
            </div>
          </div>
        </div>
        <div className="ml-[9px] h-[102px] w-[243px] border border-[#d0d0d0] bg-white">
          <Fit w={98} className="ml-[5px] mt-[4px] font-['Open_Sans',sans-serif] text-[18px] leading-[28px] text-[#333]">World Rank</Fit>
          <div className="ml-[11px] mt-[7px] h-[23px] w-[218px] border border-[#b0a595] bg-[linear-gradient(to_right,#c5e8db,#93cbd1_28%,#66b2c8_50%,#5a9bb9_70%,#55749d)]" />
          <div className="ml-[11px] mr-[13px] flex justify-between pt-[3px] font-['Open_Sans',sans-serif] text-[18px] font-light leading-[24px] text-[#222]"><span>1</span><span>40</span></div>
        </div>
      </div>
    </div>
  );
}

const GridIcon = () => <Svg w={17} h={17}><path d="M1 1h15v15H1zM8.500 1v15M1 8.500h15" stroke={G} strokeWidth="1.700" /></Svg>;

function SheetTabs() {
  const t = "font-['Roboto',sans-serif] text-[19px]";
  const sheets: [string, number, string][] = [
    ["Sheet 1", 62, "w-[84px]"], ["Sheet 2", 65, "w-[86px]"], ["Sheet 3", 65, "w-[87px]"], ["Sheet 4", 66, "w-[86px]"],
    ["Sheet 5", 64, "w-[86px]"], ["Sheet 6", 66, "w-[87px]"], ["Sheet 7", 64, "w-[85px]"], ["Sheet 8", 65, "w-[86px]"],
    ["Sheet 9", 64, "w-[86px]"], ["Sheet 10", 73, "w-[95px]"], ["Sheet 11", 70, "w-[92px]"], ["Sheet 12", 73, "w-[94px]"],
  ];
  const cell = "flex h-full shrink-0 items-center border-r border-[#cbcbcb] pb-[3px]";
  return (
    <div className="mt-[8px] flex h-[46px] shrink-0 border-y border-[#cbcbcb] bg-[#e5e5e5] text-[#6a6a6a]">
      <div className={`${cell} w-[189px]`}>
        <Svg w={12} h={18} className="ml-[17px]"><path d="M1 4c0-4 10-4 10 0v10c0 4-10 4-10 0zM1 4c0 4 10 4 10 0" stroke={G} strokeWidth="1.600" /></Svg>
        <Fit w={103} className={`ml-[9px] ${t}`}>Data Source</Fit>
      </div>
      {sheets.map(([s, w, cw], i) => (
        <div key={s} className={`${cell} ${cw} justify-center pl-px ${i === 1 ? "bg-[#fafafa] font-medium text-[#222]" : ""}`}><Fit w={w} className={t}>{s}</Fit></div>
      ))}
      <div className={`${cell} w-[155px]`}><div className="ml-[14px] mr-[9px]"><GridIcon /></div><Fit w={105} className={t}>Dashboard 1</Fit></div>
      <div className={`${cell} w-[158px]`}><div className="ml-[14px] mr-[10px]"><GridIcon /></div><Fit w={107} className={t}>Dashboard 2</Fit></div>
      <div className={`${cell} w-[103px] overflow-hidden`}><div className="ml-[15px] mr-[10px] shrink-0"><GridIcon /></div><Fit w={107} className={t}>Dashboard 3</Fit></div>
      <div className={`${cell} w-[48px] justify-center pl-0.5`}><Svg w={24} h={24}><path d="M12 18H2V3h16v9" stroke={G} strokeWidth="1.600" /><path d="M7 10v5M10.500 6v9M14 8v4" stroke={G} strokeWidth="1.800" /><path d="M18 13v10M12.500 18h11" stroke={G} strokeWidth="2.600" /></Svg></div>
      <div className={`${cell} w-[48px] justify-center pl-0.5`}><Svg w={24} h={24}><path d="M12 18H2V3h16v9M10 3v15M2 10.500h16" stroke={G} strokeWidth="1.600" /><path d="M18 13v10M12.500 18h11" stroke={G} strokeWidth="2.600" /></Svg></div>
      <div className={`${cell} w-[48px] justify-center pl-0.5`}><Svg w={24} h={24}><path d="M10 21l-8-5V3l8 4 8-4v9M10 7v14" stroke={G} strokeWidth="1.600" /><path d="M18 13v10M12.500 18h11" stroke={G} strokeWidth="2.600" /></Svg></div>
      <div className="flex items-center pt-px">
        <Svg w={8} h={14} className="ml-[14px]"><path d="M7 1L1 7l6 6" stroke="#bbb" strokeWidth="1.600" /></Svg>
        <Svg w={8} h={14} className="ml-[34px]"><path d="M1 1l6 6-6 6" stroke="#555" strokeWidth="1.600" /></Svg>
        <Tri w={11} h={8} className="ml-[29px] text-[#555]" />
      </div>
    </div>
  );
}

function Status() {
  const t = "font-['Roboto',sans-serif] text-[16px] text-[#333]";
  return (
    <div className="flex h-[25px] shrink-0 items-center bg-[#ebebeb] pt-[2px]">
      <Fit w={67} className={`ml-[15px] ${t}`}>40 marks</Fit>
      <Fit w={123} className={`ml-[18px] ${t}`}>1 row by 1 column</Fit>
      <Fit w={162} className={`ml-[18px] ${t}`}>SUM(World Rank): 820</Fit>
    </div>
  );
}

const Flower = () => (
  <Svg w={120} h={57}>
    <defs>
      <linearGradient id="soil" x1="0" y1="0" x2="0" y2="1"><stop offset="0" stopColor="#c5832c" /><stop offset="1" stopColor="#7c4512" /></linearGradient>
      <linearGradient id="pot" x1="0" y1="0" x2="1" y2="0"><stop offset="0" stopColor="#5a4744" /><stop offset="1" stopColor="#241a19" /></linearGradient>
      <linearGradient id="blade" x1="0" y1="0" x2="1" y2="1"><stop offset="0" stopColor="#e0e8ec" /><stop offset="1" stopColor="#71818a" /></linearGradient>
    </defs>
    <path d="M0 57c0-12 12-18 28-18 12 0 22 0 36 4 8-4 34-4 44-1 8 2 12 7 12 15z" fill="url(#soil)" />
    <ellipse cx="40" cy="50" rx="18" ry="4" fill="#5f340c" /><ellipse cx="90" cy="45" rx="14" ry="4" fill="#6d3f12" />
    <path d="M62 40l10-16 14 5-3 16c-7 3-16 1-21-5z" fill="url(#blade)" /><path d="M78 28l10-10" stroke="#8b98a0" strokeWidth="3.500" /><path d="M88 18l10-12" stroke="#38a6f4" strokeWidth="8" strokeLinecap="round" />
    <path d="M30 36C14 40 8 34 13 20c8 0 16 4 17 16zM42 34c12 2 18-4 14-16-10 0-15 6-14 16z" fill="#61ad32" />
    <path d="M24 28h27l-4 22c-5 3-13 3-17 0z" fill="url(#pot)" /><ellipse cx="37.500" cy="29" rx="13.500" ry="3.500" fill="#3b2b29" />
    <g fill="#f7a0cc"><circle cx="36" cy="8" r="8" /><circle cx="46" cy="11" r="8" /><circle cx="44" cy="19" r="8" /><circle cx="32" cy="20" r="8" /><circle cx="27" cy="12" r="8" /></g>
    <circle cx="36" cy="14" r="9" fill="#f2639f" /><circle cx="37" cy="15" r="4.500" fill="#e0356d" /><path d="M37 15l4-5M37 15l-5-2" stroke="#ffc83a" strokeWidth="2" />
  </Svg>
);

const Chrome = ({ dark }: { dark?: boolean }) => (
  <Svg w={40} h={40}>
    <circle cx="18" cy="18" r="18" fill="#fbc116" />
    <path d="M2.400 9A18 18 0 0 1 33.600 9H18v9z" fill="#e33b2e" />
    <path d="M2.400 9A18 18 0 0 0 18 36l8-13.500-8-4.500-8-4.500z" fill="#279847" />
    <path d="M2.400 9l8 13.500L18 18V9z" fill="#e33b2e" /><path d="M2.400 9l7.800 13.500 4 4L18 36A18 18 0 0 1 2.400 9z" fill="#279847" />
    <circle cx="18" cy="18" r="8.500" fill="#fff" /><circle cx="18" cy="18" r="6.700" fill="#3b78e7" />
    {dark ? (
      <><circle cx="27.500" cy="27" r="12" fill="#150c18" /><path d="M22 31l9-12M25 24l8 1M24 35h7" stroke="#8a1f6b" strokeWidth="2" /><path d="M22 28l8 2" stroke="#3f4ab0" strokeWidth="2" /></>
    ) : (
      <><circle cx="27.500" cy="27" r="12" fill="#ab9b6c" /><path d="M26 16c4 0 5 4 4 6l2 5 2 8-6-3-7 4 2-9-3-3z" fill="#2a231b" /><path d="M18 25l18-1" stroke="#5d3c1c" strokeWidth="2" /></>
    )}
  </Svg>
);

function TaskItem({ children, className = "", bar = "" }: { children: ReactNode; className?: string; bar?: string }) {
  return (
    <div className={`flex h-[60px] shrink-0 flex-col ${className}`}>
      <div className="flex h-[57px] items-center justify-center">{children}</div>
      <div className={`h-[3px] ${bar}`} />
    </div>
  );
}

function Taskbar() {
  const t = "font-['Open_Sans',sans-serif] text-[17.500px] text-white";
  return (
    <div className="flex h-[60px] shrink-0 items-center bg-[#1e1f1f]">
      <Svg w={24} h={24} className="ml-[24px]"><path d="M0 3.500L10.500 2v9.500H0zM11.500 1.800L24 0v11.500H11.500zM0 12.500h10.500V22L0 20.500zM11.500 12.500H24V24l-12.500-1.800z" fill="#fff" /></Svg>
      <div className="ml-[24px] flex h-[60px] w-[432px] items-center border-2 border-[#c5c5c5] bg-[#f3f3f3]">
        <Svg w={25} h={25} className="ml-[15px]"><circle cx="15.500" cy="9" r="7.700" stroke="#1a1a1a" strokeWidth="1.800" /><path d="M10 15L1 24" stroke="#1a1a1a" strokeWidth="2" /></Svg>
        <Fit w={198} className="ml-[18px] pt-[3px] font-['Open_Sans',sans-serif] text-[21.500px] text-[#2c2c2c]">Type here to search</Fit>
        <div className="ml-auto"><Flower /></div>
      </div>
      <Svg w={25} h={24} className="ml-[23px]"><path d="M1 0v4h15V0M1 24v-4h15v4M1 7.500h15v9H1zM22.500 0v6M22.500 12v12" stroke="#f3f3f3" strokeWidth="1.800" /><path d="M21 6.500h4v4h-4z" fill="#fff" /></Svg>
      <TaskItem className="ml-[35px] w-[60px]" bar="bg-[#76b9ed]">
        <Svg w={37} h={37}>
          <defs><linearGradient id="edg" x1="0" y1="0" x2="1" y2=".6"><stop stopColor="#2ba6e0" /><stop offset=".6" stopColor="#35c1c4" /><stop offset="1" stopColor="#6ee04a" /></linearGradient></defs>
          <path d="M18 0c12 0 19 8 19 16 0 7-6 10-12 9-3-1-3-2-2-4 2-4-1-8-6-8C9 13 3 18 0 22 0 9 8 0 18 0z" fill="url(#edg)" />
          <path d="M0 20c2-7 9-11 17-9-6 3-7 9-4 15 4 7 12 8 20 4-4 6-9 7-15 7C8 37 0 30 0 20z" fill="#1273c4" />
          <path d="M13 26c4 7 12 8 20 4-3 4-8 7-15 7-4-1-6-6-5-11z" fill="#0c4c93" />
          <circle cx="9" cy="28" r="8.500" fill="#b9b6b3" /><circle cx="9" cy="25" r="3" fill="#f1f1f1" /><path d="M3.500 33c1-6 10-6 11 0-3 3-8 3-11 0z" fill="#f1f1f1" />
        </Svg>
      </TaskItem>
      <TaskItem className="ml-[15px] w-[61px]" bar="bg-[linear-gradient(to_right,#76b9ed_78%,#4f81a8_78%)]">
        <Svg w={33} h={30}><path d="M0 2a2 2 0 0 1 2-2h11l3 4H0z" fill="#e39a08" /><path d="M0 4h15l2-2h14a2 2 0 0 1 2 2v25H0z" fill="#ffd468" /><path d="M5 30V18a2 2 0 0 1 2-2h19a2 2 0 0 1 2 2v12h-6v-7H11v7z" fill="#3a93dc" /></Svg>
      </TaskItem>
      <TaskItem className="ml-[14px] w-[61px]">
        <Svg w={33} h={36}>
          <defs><linearGradient id="cp1" x1="0" y1="0" x2="0" y2="1"><stop stopColor="#8b95ee" /><stop offset="1" stopColor="#5a4cc8" /></linearGradient><linearGradient id="cp2" x1="0" y1="0" x2="1" y2="1"><stop stopColor="#3b68d8" /><stop offset="1" stopColor="#5ac3f0" /></linearGradient><linearGradient id="cp3" x1="0" y1="0" x2="1" y2="0"><stop stopColor="#c58af0" /><stop offset="1" stopColor="#8450c8" /></linearGradient></defs>
          <path d="M16 1L4 7C1 9 0 10 0 13v10c0 4 4 6 8 3V14c0-6 8-7 8-13z" fill="url(#cp1)" /><path d="M14 1c2-1 4-1 6 0l10 6c2 1 3 3 3 5v11c0 3-3 4-7 2V15l-10-5z" fill="url(#cp2)" /><path d="M3 28c4 0 6-1 8-3l12-7c3-2 3-4 3-5 6 3 7 6 7 10 0 3-1 4-4 6l-10 6c-2 1-4 1-6 0z" fill="url(#cp3)" />
          <path d="M11 14l6-3.500 6 3.500v8l-6 3.500-6-3.500z" fill="#1e1f1f" />
        </Svg>
      </TaskItem>
      <TaskItem className="ml-[13px] w-[61px]">
        <Svg w={35} h={38}><path d="M9 7V3a2 2 0 0 1 2-2h13a2 2 0 0 1 2 2v4" stroke="#36a6e8" strokeWidth="2" /><path d="M0 5h35v28a4 4 0 0 1-4 4H4a4 4 0 0 1-4-4z" fill="#f4f4f4" /><path d="M10 13h7v7h-7z" fill="#f25022" /><path d="M18.500 13h7v7h-7z" fill="#7fba00" /><path d="M10 21.500h7v7h-7z" fill="#00a4ef" /><path d="M18.500 21.500h7v7h-7z" fill="#ffb900" /></Svg>
      </TaskItem>
      <TaskItem className="ml-[9px] w-[73px] bg-[#4b4b4b]" bar="bg-[#76b9ed]"><div className="pt-1.5"><Chrome /></div></TaskItem>
      <TaskItem className="ml-[8px] w-[61px]" bar="bg-[#76b9ed]"><div className="pl-0.5 pt-1.5"><Chrome dark /></div></TaskItem>
      <Svg w={36} h={34} className="ml-[236px]"><circle cx="16.500" cy="16" r="14.500" fill="#0d96d8" stroke="#fff" strokeWidth="3" /><path d="M11.500 12c0-7 11-7 11-.5 0 4-5 4-5 8" stroke="#fff" strokeWidth="3.400" /><circle cx="17.300" cy="24.500" r="2.200" fill="#fff" /><circle cx="28" cy="24.500" r="7.800" fill="#f3ae1f" /><path d="M28 20v2.500M28 24v6" stroke="#fff" strokeWidth="2.400" /></Svg>
      <Svg w={35} h={36} className="ml-[42px]"><defs><linearGradient id="sun" x1="0" y1="0" x2="1" y2="1"><stop stopColor="#f6bf2d" /><stop offset="1" stopColor="#f0731d" /></linearGradient><linearGradient id="cloud" x1="0" y1="0" x2="0" y2="1"><stop stopColor="#87aef0" /><stop offset="1" stopColor="#dfe8fb" /></linearGradient></defs><circle cx="15.500" cy="15.500" r="15" fill="url(#sun)" /><path d="M10 35a6 6 0 0 1-1-12 8.500 8.500 0 0 1 16-3c5 0 7 3 6 6 5 2 4 9-1 9z" fill="url(#cloud)" /></Svg>
      <Fit w={43} className="ml-[11px] pt-[2px] font-['Open_Sans',sans-serif] text-[20px] text-white">31°C</Fit>
      <Svg w={18} h={11} className="ml-[39px]"><path d="M1 10l8-8.500 8 8.500" stroke="#fff" strokeWidth="1.500" /></Svg>
      <Svg w={25} h={21} className="ml-[15px]"><path d="M5 16a5 5 0 0 1-1-9 8 8 0 0 1 14-4c4 1 5 6 2 9z" fill="#a9a9a9" /><path d="M2 9c6-5 10-1 12 3l-8 4c-4 0-6-3-4-7z" fill="#dadada" /><circle cx="17.500" cy="14.500" r="6.500" fill="#d8232a" /><path d="M15 12l5 5M20 12l-5 5" stroke="#fff" strokeWidth="1.700" /></Svg>
      <Svg w={25} h={24} className="ml-[11px]"><path d="M1 3.500L23 1v14M1 3.500V19l12 2" stroke="#fff" strokeWidth="1.600" /><path d="M7 10c2-4 7-4 9-1M16 6v3.500h-3.500M16 13c-2 4-7 4-9 1M7 17v-3.500h3.500" stroke="#fff" strokeWidth="1.400" /><circle cx="18.500" cy="18" r="5.700" fill="#2a70bd" /></Svg>
      <Svg w={23} h={14} className="ml-[12px]"><path d="M1 1h19v12H1z" stroke="#fff" strokeWidth="1.500" /><path d="M3 3h11v8H3zM21 5h2v4h-2z" fill="#fff" /></Svg>
      <Svg w={23} h={20} className="ml-[12px]"><path d="M1 7h4l5-5v16l-5-5H1z" stroke="#fff" strokeWidth="1.400" /><path d="M12.500 7c1.500 1.500 1.500 4.500 0 6M15.500 4.500c3 3 3 8 0 11M18.500 2c4.500 4.500 4.500 11.500 0 16" stroke="#fff" strokeWidth="1.300" /></Svg>
      <Svg w={16} h={25} className="ml-[16px]"><rect x="3.500" width="9" height="19" rx="2" fill="#fff" /><path d="M1 15v3c0 3 14 3 14 0v-3M8 20v4M5 24h6" stroke="#fff" strokeWidth="1.500" /></Svg>
      <Fit w={34} className={`ml-[20px] ${t}`}>ENG</Fit>
      <div className="ml-[19px] flex w-[96px] flex-col items-center pt-px"><Fit w={43} className={`leading-[28px] ${t}`}>18:04</Fit><Fit w={92} className={`leading-[28px] ${t}`}>14-04-2023</Fit></div>
      <div className="relative ml-[27px] mt-[9px] h-[38px] w-[38px] shrink-0">
        <Svg w={25} h={24}><path d="M0 0h24v18H11l-5 5v-5H0z" fill="#fff" /><path d="M4 5h16M4 9h16M4 13h10" stroke="#222" strokeWidth="1.500" /></Svg>
        <div className="absolute left-[9px] top-[11px] flex h-[27px] w-[27px] items-center justify-center rounded-full border border-[#aaa] bg-[#3a3a3a] font-['Open_Sans',sans-serif] text-[16px] font-semibold text-white">10</div>
      </div>
      <div className="ml-auto mr-[6px] h-[60px] w-px bg-[#777]" />
    </div>
  );
}

export default function App() {
  return (
    <div className="flex h-[1080px] w-[1920px] flex-col overflow-hidden bg-[#f2f2f2]">
      <div className="h-[155px] shrink-0 border-b-2 border-[#a3b1cb] bg-[#cbdcf6]">
        <Tabs />
        <AddressBar />
        <Bookmarks />
      </div>
      <Header />
      <Toolbar />
      <div className="flex h-[635px] shrink-0">
        <DataPane />
        <CardsColumn />
        <Workspace />
      </div>
      <SheetTabs />
      <Status />
      <Taskbar />
    </div>
  );
}
